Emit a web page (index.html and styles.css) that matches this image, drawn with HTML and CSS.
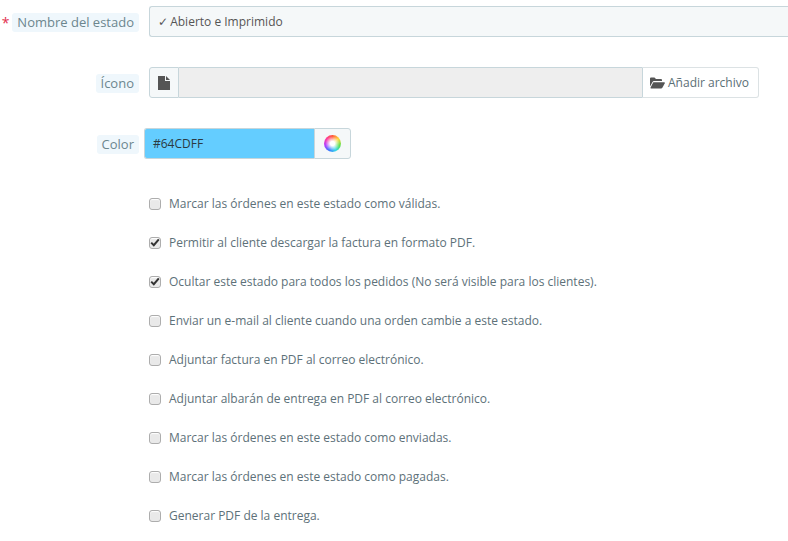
FILE: index.html
```html
<!DOCTYPE html>
<html lang="es">
<head>
<meta charset="utf-8">
<title>Estado</title>
<link rel="stylesheet" href="styles.css">
</head>
<body>
<form class="form">
  <div class="row">
    <div class="label-col"><span class="req">*</span><span class="label">Nombre del estado</span></div>
    <div class="text-input"><span class="tick">✓</span> Abierto e Imprimido</div>
  </div>
  <div class="row">
    <div class="label-col"><span class="label">Ícono</span></div>
    <div class="file-group">
      <span class="addon">
        <svg class="ico-file" viewBox="0 0 12 14" width="12" height="14"><path d="M0 0H7V5H12V14H0Z" fill="#555"/><path d="M8 0L12 4H8Z" fill="#555"/></svg>
      </span>
      <span class="file-name"></span>
      <span class="file-btn">
        <svg class="ico-folder" viewBox="0 0 15 12" width="15" height="12"><path d="M0 1.5Q0 .5 1 .5H4.5L6 2H11Q12 2 12 3V4H4Q3 4 2.5 5L0 9.5Z" fill="#555"/><path d="M3.3 5.2H14.2Q15.3 5.2 14.8 6.2L12.5 10.6Q12 11.5 11 11.5H1Q.2 11.5 .6 10.6Z" fill="#555"/></svg>
        Añadir archivo
      </span>
    </div>
  </div>
  <div class="row row-color">
    <div class="label-col"><span class="label">Color</span></div>
    <div class="color-group">
      <span class="color-value">#64CDFF</span>
      <span class="color-btn"><span class="wheel"></span></span>
    </div>
  </div>
  <ul class="checks">
    <li class="check"><span class="box"></span>Marcar las órdenes en este estado como válidas.</li>
    <li class="check"><span class="box on"><svg viewBox="0 0 10 9" width="10" height="9"><path d="M1.2 4.6L3.8 7.2L8.8 1.4" fill="none" stroke="#333" stroke-width="2"/></svg></span>Permitir al cliente descargar la factura en formato PDF.</li>
    <li class="check"><span class="box on"><svg viewBox="0 0 10 9" width="10" height="9"><path d="M1.2 4.6L3.8 7.2L8.8 1.4" fill="none" stroke="#333" stroke-width="2"/></svg></span>Ocultar este estado para todos los pedidos (No será visible para los clientes).</li>
    <li class="check"><span class="box"></span>Enviar un e-mail al cliente cuando una orden cambie a este estado.</li>
    <li class="check"><span class="box"></span>Adjuntar factura en PDF al correo electrónico.</li>
    <li class="check"><span class="box"></span>Adjuntar albarán de entrega en PDF al correo electrónico.</li>
    <li class="check"><span class="box"></span>Marcar las órdenes en este estado como enviadas.</li>
    <li class="check"><span class="box"></span>Marcar las órdenes en este estado como pagadas.</li>
    <li class="check"><span class="box"></span>Generar PDF de la entrega.</li>
  </ul>
</form>
</body>
</html>
```

FILE: styles.css
```css
* { box-sizing: border-box; }
html, body { margin: 0; padding: 0; background: #fff; overflow: hidden; }
body { height: 541px; font-family: "Open Sans", sans-serif; font-size: 12px; color: #555; }
.form { padding-top: 6px; display: flex; flex-direction: column; }
.row { display: flex; height: 31px; margin-bottom: 30px; gap: 10px; }
.label-col { width: 139px; flex: none; display: flex; align-items: center; justify-content: flex-end; white-space: nowrap; padding-top: 2px; }
.req { color: #e2304f; font-size: 14px; margin-right: 3px; line-height: 1; }
.label { background: #eff7fc; color: #6c868e; font-size: 13px; line-height: 19px; height: 19px; padding: 0 5px 0 5px; border-radius: 3px; }
.text-input { flex: 1; height: 31px; padding: 0 8px; line-height: 29px; background: #f5f8f9; border: 1px solid #c7d6db; border-right: 0; border-radius: 3px 0 0 3px; color: #555; }
.tick { font-family: "DejaVu Sans", sans-serif; font-size: 12px; margin-right: -1px; }
.file-group { width: 610px; display: flex; height: 31px; border-radius: 3px; }
.addon { width: 30px; flex: none; background: #f5f8f9; border: 1px solid #c7d6db; border-radius: 3px 0 0 3px; display: flex; align-items: center; justify-content: center; }
.file-name { flex: 1; background: #eee; border: solid #c7d6db; border-width: 1px 0; }
.file-btn { flex: none; width: 117px; background: #fff; border: 1px solid #dce2e4; border-left-color: #c7d6db; border-radius: 0 3px 3px 0; display: flex; align-items: center; justify-content: center; gap: 3px; color: #5b6f76; padding-right: 2px; }
.row-color { gap: 5px; }
.color-group { width: 207px; display: flex; height: 31px; }
.color-value { width: 170px; background: #64cdff; border: 1px solid #c7d6db; border-right: 0; border-radius: 3px 0 0 3px; line-height: 29px; padding-left: 8px; color: #2b3a42; }
.color-btn { flex: 1; background: #f5f8f9; border: 1px solid #c7d6db; border-radius: 0 3px 3px 0; display: flex; align-items: center; justify-content: center; }
.wheel { width: 17px; height: 17px; border-radius: 50%; background: radial-gradient(circle, #fff 0 18%, rgba(255,255,255,0) 60%), conic-gradient(#ff5a3c, #ffd83c, #5fe04a, #35d8e8, #3a7bff, #b53cff, #ff3c9e, #ff5a3c); }
.checks { list-style: none; margin: -5px 0 0; padding: 0 0 0 149px; }
.check { display: flex; align-items: center; height: 39px; color: #5d7179; font-size: 12px; }
.box { width: 12px; height: 12px; margin-right: 8px; flex: none; background: #e9e9e9; border: 1px solid #adadad; border-radius: 3px; box-shadow: inset 0 1px 1px #fff; display: flex; align-items: center; justify-content: center; }
```
